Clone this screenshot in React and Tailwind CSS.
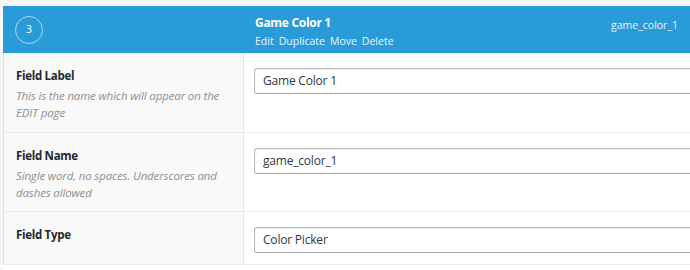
import React from "react";

const ROWS = [
  { label: "Field Label", desc: ["This is the name which will appear on the", "EDIT page"], value: "Game Color 1", h: "h-[80px]" },
  { label: "Field Name", desc: ["Single word, no spaces. Underscores and", "dashes allowed"], value: "game_color_1", h: "h-[79px]" },
  { label: "Field Type", desc: [], value: "Color Picker", h: "h-[53px]" },
];

function Row({ row }) {
  return (
    <div className={`grid grid-cols-[240px_1fr] border-b border-[#ebebeb] ${row.h}`}>
      <div className="bg-[#f9f9f9] border-r border-[#e8e8e8] pl-[12px] pt-[13px]">
        <div className="text-[11.5px] font-bold text-[#23282d] leading-[20px] tracking-[-0.3px]">{row.label}</div>
        {row.desc.length > 0 && (
          <div className="mt-[1px] text-[11.5px] italic text-[#8f8f8f] leading-[17px] tracking-[-0.15px]">
            {row.desc.map((d) => (
              <div key={d}>{d}</div>
            ))}
          </div>
        )}
      </div>
      <div className="pl-[10px] pt-[15px] overflow-hidden">
        <div className="w-[470px] h-[26px] border border-[#b4b9be] border-b-[#9ea3a8] rounded-[3px] shadow-[inset_0_1px_2px_rgba(0,0,0,0.07)] bg-white flex items-center pl-[8px] text-[12px] tracking-[-0.2px] text-[#32373c]">
          {row.value}
        </div>
      </div>
    </div>
  );
}

export default function App() {
  return (
    <div className="w-[690px] h-[270px] overflow-hidden bg-[#f7f7f7] pt-[6px] pl-[3px] font-['Open_Sans',sans-serif]">
      <div className="h-full bg-white">
        <div className="flex h-[47px] bg-[#2a9bd9] text-white">
          <div className="w-[240px] flex items-center pl-[12px]">
            <div className="w-[28px] h-[28px] rounded-full border border-white/60 flex items-center justify-center text-[11px]">
              3
            </div>
          </div>
          <div className="flex-1 pl-[12px] pt-[8px]">
            <div className="text-[12px] font-bold leading-[18px] tracking-[-0.3px]">Game Color 1</div>
            <div className="flex gap-[5px] text-[10.5px] leading-[16px] text-[#eaf5fc] mt-[1px]">
              <span>Edit</span>
              <span>Duplicate</span>
              <span>Move</span>
              <span>Delete</span>
            </div>
          </div>
          <div className="pr-[12px] pt-[11px] text-[10.5px] text-[#eaf5fc] leading-[16px]">game_color_1</div>
        </div>
        <div className="border-l border-[#e1e1e1]">
          {ROWS.map((r) => (
            <Row key={r.label} row={r} />
          ))}
        </div>
      </div>
    </div>
  );
}
